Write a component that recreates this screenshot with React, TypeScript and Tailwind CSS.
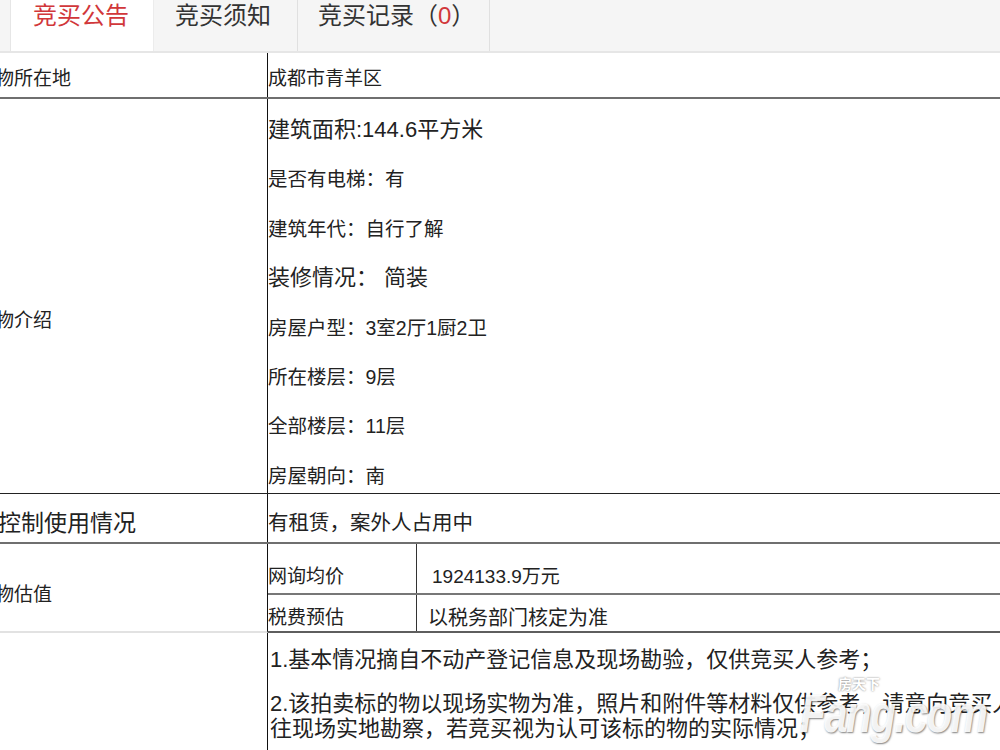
import React from 'react';

const intro = [
  { text: '建筑面积:144.6平方米', big: true },
  { text: '是否有电梯：有' },
  { text: '建筑年代：自行了解' },
  { text: '装修情况： 简装', big: true },
  { text: '房屋户型：3室2厅1厨2卫' },
  { text: '所在楼层：9层' },
  { text: '全部楼层：11层' },
  { text: '房屋朝向：南' },
];

export default function App() {
  return (
    <div className="relative w-[1000px] h-[750px] overflow-hidden bg-white text-[#222] font-['Liberation_Sans','Noto_Sans_CJK_SC',sans-serif]">
      {/* tabs */}
      <div className="flex h-[53px] bg-[#f5f5f5] border-b-2 border-[#e6e6e6]">
        <div className="w-[10px]" />
        <div className="w-[143px] bg-white border-l border-[#e6e6e6] pl-[22px] text-[24px] leading-[32px] text-[#d1373a]">
          竞买公告
        </div>
        <div className="w-[144px] border-l border-[#ececec] pl-[21px] text-[24px] leading-[32px] text-[#333]">
          竞买须知
        </div>
        <div className="w-[193px] border-l border-r border-[#e0e0e0] pl-[20px] text-[24px] leading-[32px] text-[#333] whitespace-nowrap">
          竞买记录（<span className="text-[#d1373a]">0</span>）
        </div>
      </div>

      {/* 所在地 */}
      <div className="flex h-[46px] border-b-2 border-[#6f6f6f]">
        <div className="w-[268px] shrink-0 border-r border-[#111] flex items-center pt-[8px] overflow-hidden">
          <span className="ml-[-43px] whitespace-nowrap text-[19px]">标的物所在地</span>
        </div>
        <div className="flex-1 flex items-center pt-[8px] text-[19px]">成都市青羊区</div>
      </div>

      {/* 介绍 */}
      <div className="flex h-[395px] border-b border-[#222]">
        <div className="w-[268px] shrink-0 border-r border-[#111] flex items-center pt-[50px] overflow-hidden">
          <span className="ml-[-43px] whitespace-nowrap text-[19px]">标的物介绍</span>
        </div>
        <div className="flex-1 flex flex-col gap-[23.4px] pt-[18px]">
          {intro.map((l) => (
            <div
              key={l.text}
              className={`whitespace-pre leading-[26px] ${l.big ? 'text-[22px]' : 'text-[19.5px]'}`}
            >
              {l.text}
            </div>
          ))}
        </div>
      </div>

      {/* 使用情况 */}
      <div className="flex h-[50px] border-b-2 border-[#6f6f6f]">
        <div className="w-[268px] shrink-0 border-r border-[#111] flex items-center pt-[10px] overflow-hidden">
          <span className="ml-[-2px] whitespace-nowrap text-[23px]">控制使用情况</span>
        </div>
        <div className="flex-1 flex items-center pt-[10px] text-[20.5px]">有租赁，案外人占用中</div>
      </div>

      {/* 估值 */}
      <div className="flex h-[89px]">
        <div className="w-[268px] shrink-0 border-r border-b-2 border-r-[#111] border-b-[#e2e2e2] flex items-center pt-[16px] overflow-hidden">
          <span className="ml-[-43px] whitespace-nowrap text-[19px]">标的物估值</span>
        </div>
        <div className="flex-1 flex flex-col border-b-2 border-[#5e5e5e]">
          <div className="flex h-[51px] border-b-2 border-[#777]">
            <div className="w-[149px] border-r border-[#333] flex items-end pb-[2px] text-[19px]">网询均价</div>
            <div className="flex-1 flex items-end pb-[2px] pl-[15px] text-[19px]">1924133.9万元</div>
          </div>
          <div className="flex flex-1">
            <div className="w-[149px] border-r border-[#333] flex items-end text-[19px] leading-[26px]">税费预估</div>
            <div className="flex-1 flex items-end pl-[11px] text-[20px] leading-[26px]">以税务部门核定为准</div>
          </div>
        </div>
      </div>

      {/* 说明 */}
      <div className="flex h-[120px]">
        <div className="w-[268px] shrink-0 border-r border-[#111]" />
        <div className="flex-1 pl-[2px] pt-[14px] text-[22px] leading-[26px] whitespace-nowrap">
          <div>1.基本情况摘自不动产登记信息及现场勘验，仅供竞买人参考；</div>
          <div className="mt-[18px]">2.该拍卖标的物以现场实物为准，照片和附件等材料仅供参考，请意向竞买人前</div>
          <div className="-mt-[1px]">往现场实地勘察，若竞买视为认可该标的物的实际情况；</div>
        </div>
      </div>

      {/* watermark */}
      <div className="absolute left-[800px] top-[676px] pointer-events-none select-none">
        <div className="ml-[38px] text-[14px] leading-[16px] font-bold text-white [text-shadow:0_0_2px_rgba(0,0,0,0.55)]">
          房天下
        </div>
        <div className="-mt-[8px] origin-left scale-x-[0.78] text-[54px] leading-[58px] font-bold italic tracking-[-2px] text-white/90 whitespace-nowrap [text-shadow:1px_1px_2px_rgba(0,0,0,0.5)]">
          Fang.com
        </div>
      </div>
    </div>
  );
}
